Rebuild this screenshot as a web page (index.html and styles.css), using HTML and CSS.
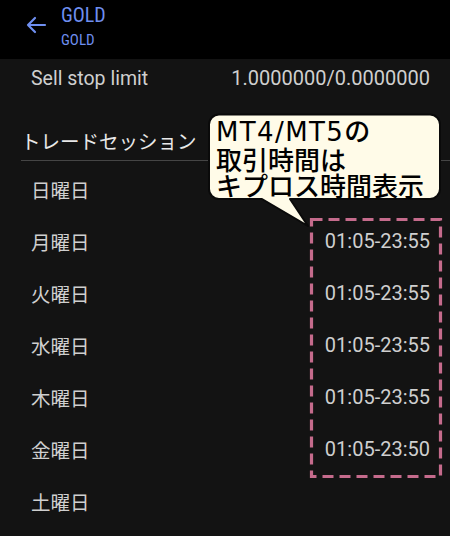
FILE: index.html
```html
<!DOCTYPE html>
<html lang="ja">
<head>
<meta charset="utf-8">
<link rel="stylesheet" href="styles.css">
</head>
<body>
<div class="screen">
  <header class="topbar">
    <svg class="back" width="22" height="18" viewBox="0 0 22 18">
      <path d="M20 9H3M10 2L3 9l7 7" fill="none" stroke="#6f8ff0" stroke-width="2.2" stroke-linecap="round" stroke-linejoin="round"/>
    </svg>
    <div class="titles">
      <div class="title">GOLD</div>
      <div class="subtitle">GOLD</div>
    </div>
  </header>
  <div class="row first">
    <span class="label">Sell stop limit</span>
    <span class="value">1.0000000/0.0000000</span>
  </div>
  <div class="section">トレードセッション</div>
  <div class="row day"><span class="label">日曜日</span><span class="value"></span></div>
  <div class="row day"><span class="label">月曜日</span><span class="value">01:05-23:55</span></div>
  <div class="row day"><span class="label">火曜日</span><span class="value">01:05-23:55</span></div>
  <div class="row day"><span class="label">水曜日</span><span class="value">01:05-23:55</span></div>
  <div class="row day"><span class="label">木曜日</span><span class="value">01:05-23:55</span></div>
  <div class="row day"><span class="label">金曜日</span><span class="value">01:05-23:50</span></div>
  <div class="row day"><span class="label">土曜日</span><span class="value"></span></div>

  <svg class="overlay" width="450" height="536" viewBox="0 0 450 536">
    <rect x="311.5" y="219.5" width="129" height="257" fill="none" stroke="#c56b8c" stroke-width="3.2" stroke-dasharray="11 6"/>
    <path d="M219 114.5H430a10 10 0 0 1 10 10V189a10 10 0 0 1-10 10H290L308 226L262 199H219a10 10 0 0 1-10-10V124.5a10 10 0 0 1 10-10Z" fill="#fffbe8" stroke="#0a0a0a" stroke-width="2" stroke-linejoin="round"/>
  </svg>
  <div class="bubble-text"><span class="latin">MT4/MT5</span>の<br>取引時間は<br>キプロス時間表示</div>
</div>
</body>
</html>
```
FILE: styles.css
```css
html, body {
  margin: 0;
  padding: 0;
  background: #131313;
}
.screen {
  position: relative;
  width: 450px;
  height: 536px;
  overflow: hidden;
  background: #131313;
  font-family: Roboto, "Noto Sans CJK JP", sans-serif;
}
.topbar {
  height: 59px;
  background: #000;
  display: flex;
  align-items: center;
}
.back {
  margin-left: 25px;
  margin-right: 14px;
  margin-top: -10px;
}
.titles {
  display: flex;
  flex-direction: column;
  color: #6f8ff0;
  font-family: "Roboto Condensed", "Liberation Sans Narrow", "DejaVu Sans Condensed", Roboto, sans-serif;
  margin-top: -6px;
}
.title {
  font-size: 20px;
  line-height: 24px;
}
.subtitle {
  font-size: 15px;
  line-height: 20px;
  margin-top: 3px;
}
.row {
  display: flex;
  justify-content: space-between;
  align-items: center;
  color: #cfcfcf;
  font-size: 20px;
}
.row.first {
  height: 38px;
  padding: 0 20px 0 31px;
}
.row.first .label {
  font-size: 19.5px;
}
.row.day {
  height: 52px;
  padding: 0 20px 0 31px;
}
.label {
  font-family: Roboto, "Noto Sans CJK JP", sans-serif;
}
.day .label {
  font-family: "Noto Sans CJK JP", sans-serif;
  font-size: 19.5px;
}
.section {
  margin-left: 21px;
  display: flex;
  align-items: flex-end;
  padding-bottom: 7px;
  box-sizing: border-box;
  height: 64px;
  border-bottom: 1px solid #454545;
  color: #e8e8e8;
  font-family: "Noto Sans CJK JP", sans-serif;
  font-size: 19.5px;
  line-height: 24px;
  margin-bottom: 2px;
}
.overlay {
  position: absolute;
  left: 0;
  top: 0;
}
.bubble-text {
  position: absolute;
  left: 216px;
  top: 117px;
  color: #000;
  font-family: "Noto Sans CJK JP", sans-serif;
  font-weight: 500;
  font-size: 26px;
  line-height: 26.5px;
}
.latin {
  font-family: "DejaVu Sans", sans-serif;
  letter-spacing: 1.4px;
}
```
